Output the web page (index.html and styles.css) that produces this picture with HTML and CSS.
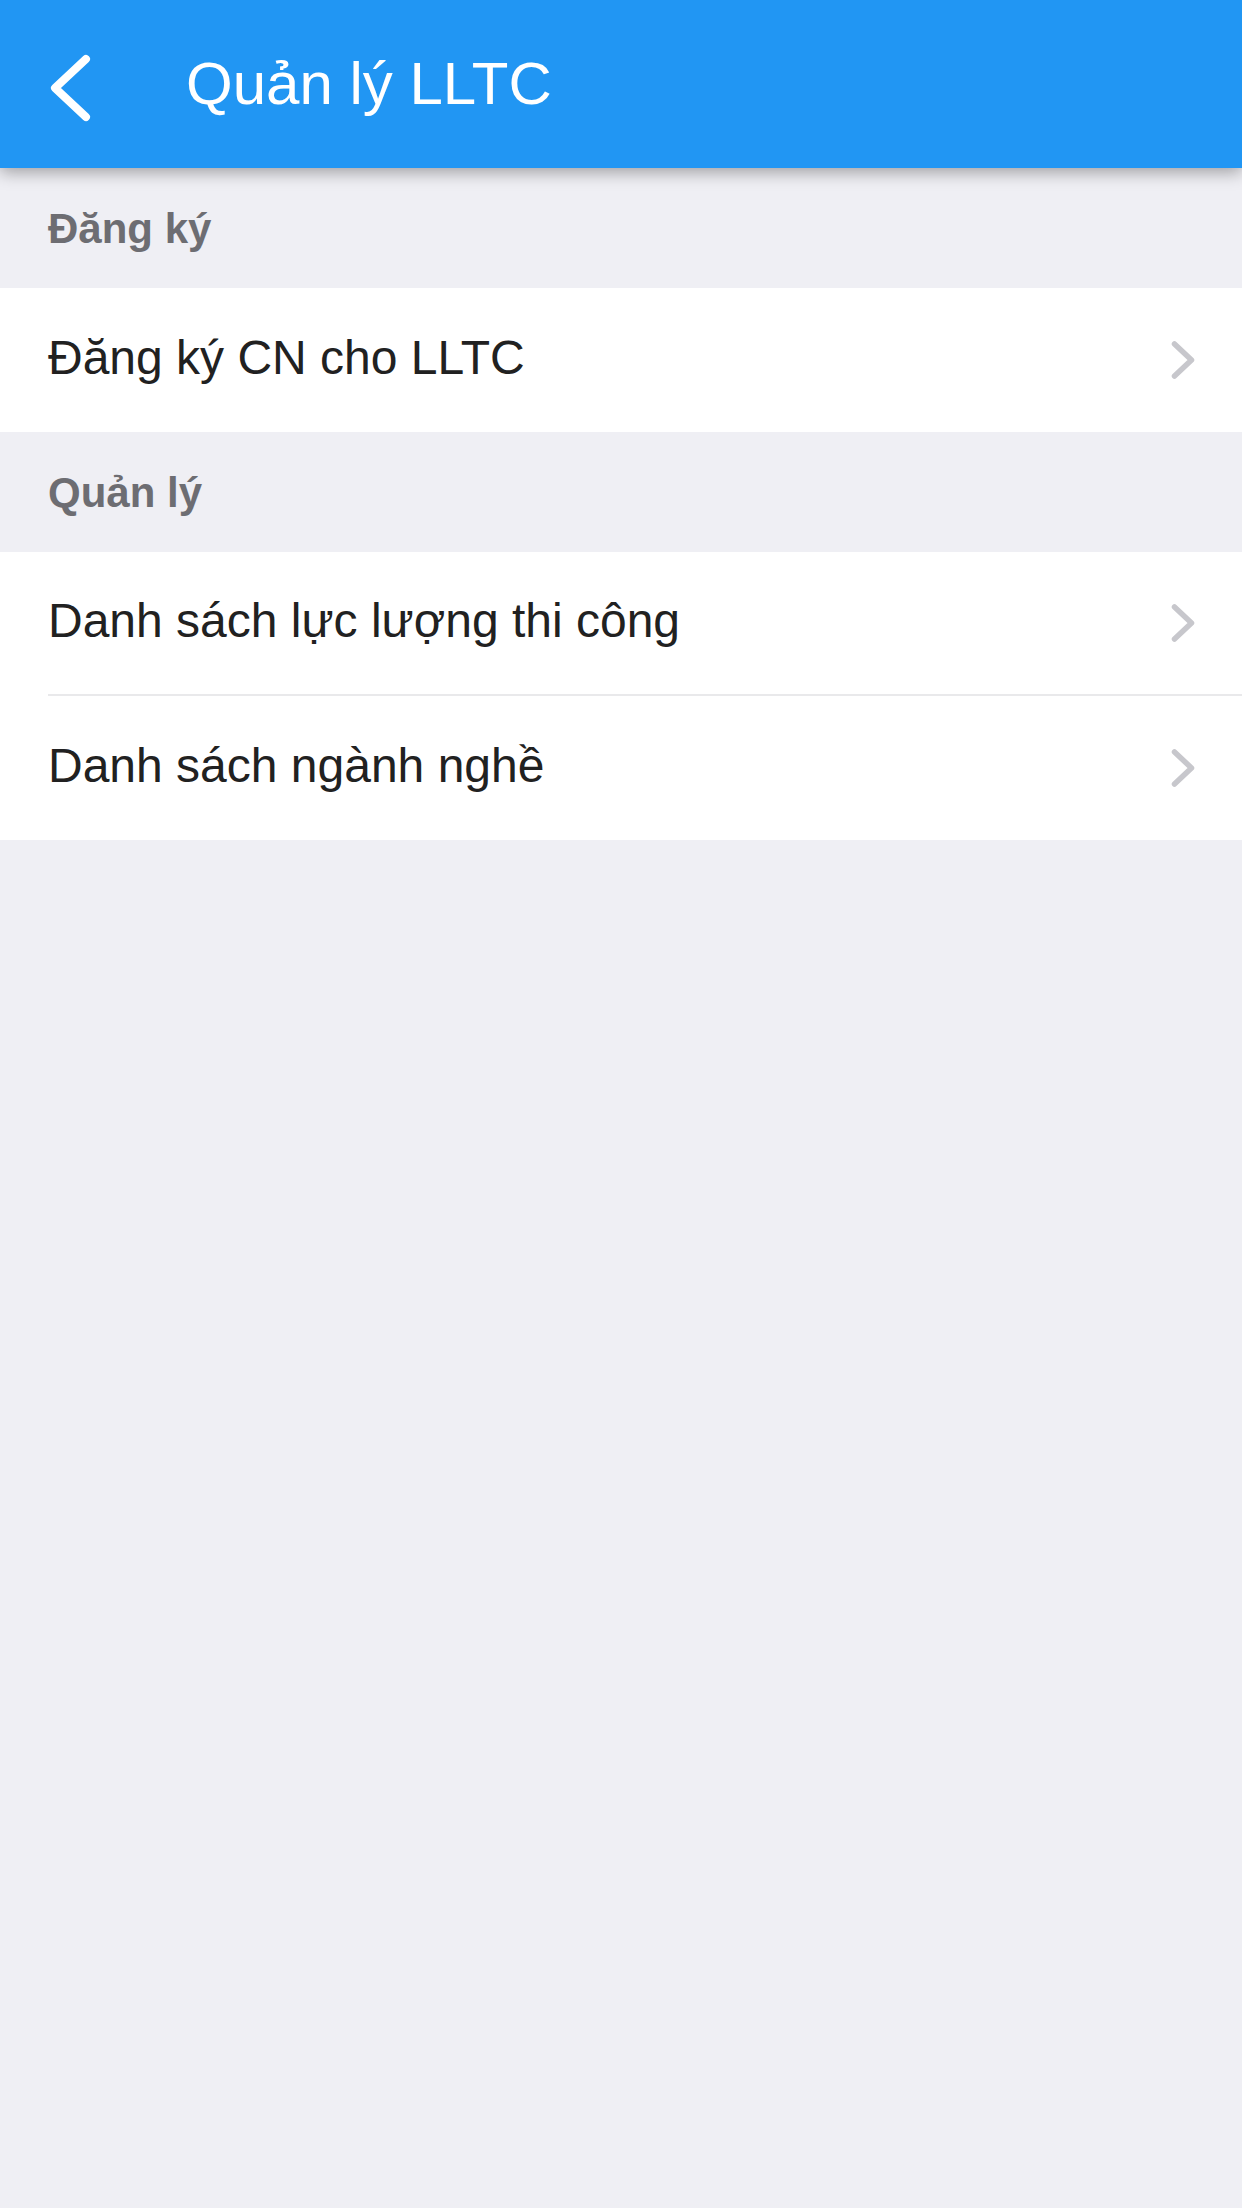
FILE: index.html
```html
<!DOCTYPE html>
<html lang="vi">
<head>
<meta charset="utf-8">
<title>Quản lý LLTC</title>
<link rel="stylesheet" href="styles.css">
</head>
<body>
<header class="appbar">
  <svg class="back" width="44" height="70" viewBox="0 0 44 70">
    <path d="M38 6 L7 35 L38 64" fill="none" stroke="#fff" stroke-width="8" stroke-linecap="round" stroke-linejoin="round"/>
  </svg>
  <h1 class="title">Quản lý LLTC</h1>
</header>
<main>
  <div class="section">Đăng ký</div>
  <div class="group">
    <div class="row"><div class="row-inner"><span class="label">Đăng ký CN cho LLTC</span><svg class="chev" width="24" height="40" viewBox="0 0 24 40"><path d="M3.5 4 L20.5 20 L3.5 36" fill="none" stroke="#c7c7cc" stroke-width="5.5" stroke-linecap="round" stroke-linejoin="round"/></svg></div></div>
  </div>
  <div class="section">Quản lý</div>
  <div class="group">
    <div class="row"><div class="row-inner"><span class="label">Danh sách lực lượng thi công</span><svg class="chev" width="24" height="40" viewBox="0 0 24 40"><path d="M3.5 4 L20.5 20 L3.5 36" fill="none" stroke="#c7c7cc" stroke-width="5.5" stroke-linecap="round" stroke-linejoin="round"/></svg></div></div>
    <div class="row"><div class="row-inner"><span class="label">Danh sách ngành nghề</span><svg class="chev" width="24" height="40" viewBox="0 0 24 40"><path d="M3.5 4 L20.5 20 L3.5 36" fill="none" stroke="#c7c7cc" stroke-width="5.5" stroke-linecap="round" stroke-linejoin="round"/></svg></div></div>
  </div>
</main>
</body>
</html>
```
FILE: styles.css
```css
html, body {
  margin: 0;
  padding: 0;
}
body {
  background: #efeff4;
  min-height: 2208px;
  font-family: "Liberation Sans", Arial, sans-serif;
}
.appbar {
  position: relative;
  z-index: 1;
  height: 168px;
  background: #2196f3;
  display: flex;
  align-items: center;
  padding-left: 48px;
  box-shadow: 0 4px 16px rgba(0, 0, 0, 0.35);
}
.back {
  display: block;
  margin-top: 7px;
  flex: none;
}
.title {
  margin: 0 0 0 94px;
  font-size: 60px;
  font-weight: normal;
  color: #fff;
  line-height: 1;
}
.section {
  height: 120px;
  display: flex;
  align-items: center;
  padding-left: 48px;
  font-size: 42px;
  font-weight: bold;
  color: #6d6d72;
  box-sizing: border-box;
  padding-top: 2px;
}
.group {
  background: #fff;
}
.row {
  padding-left: 48px;
}
.row-inner {
  height: 144px;
  box-sizing: border-box;
  display: flex;
  align-items: center;
  justify-content: space-between;
  padding-right: 47px;
  border-bottom: 2px solid #e9e9eb;
}
.row:last-child .row-inner {
  border-bottom: none;
}
.label {
  font-size: 48px;
  color: #212121;
  line-height: 1;
  margin-bottom: 5px;
}
.chev {
  display: block;
  flex: none;
}
```
